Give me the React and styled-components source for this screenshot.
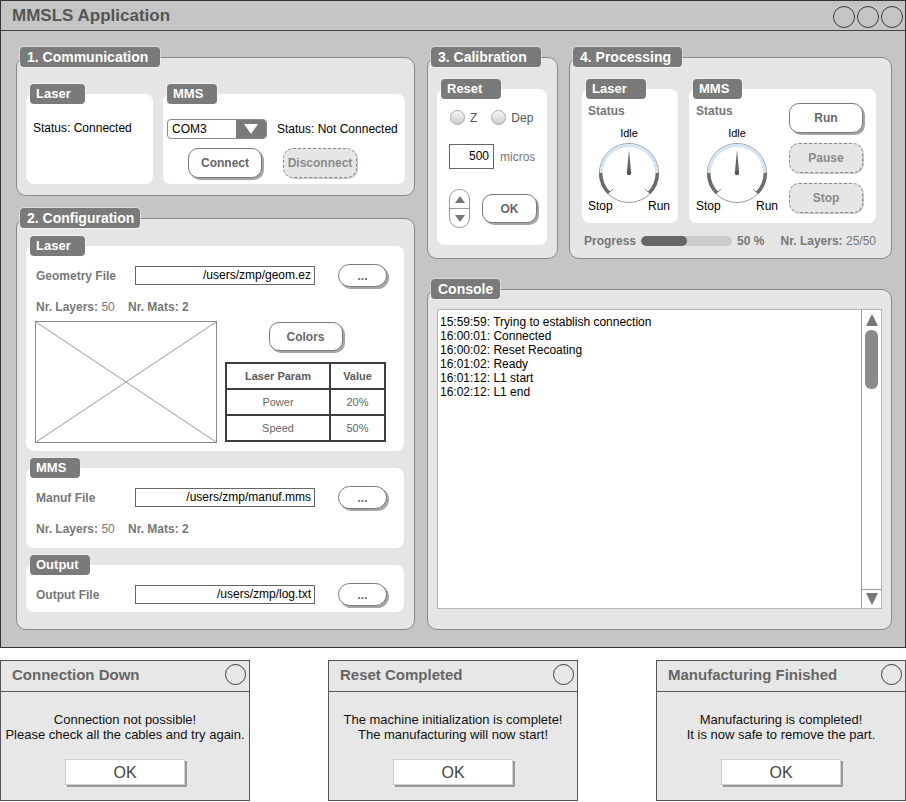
import React from "react";
import styled, { createGlobalStyle, css } from "styled-components";

const GlobalStyle = createGlobalStyle`
  html, body { margin: 0; padding: 0; background: #fff; }
  body { font-family: "Liberation Sans", Arial, Helvetica, sans-serif; font-size: 12px; color: #111; }
  * { box-sizing: border-box; }
`;

const Page = styled.div`
  width: 906px;
  height: 802px;
  display: flex;
  flex-direction: column;
`;

const Window = styled.div`
  width: 906px;
  height: 648px;
  border: 1px solid #333;
  background: #c5c5c5;
  display: flex;
  flex-direction: column;
`;

const TitleBar = styled.div`
  height: 30px;
  flex: none;
  border-bottom: 1px solid #444;
  display: flex;
  align-items: center;
  padding: 0 2px 0 11px;
`;

const AppTitle = styled.div`
  font-size: 17px;
  font-weight: bold;
  color: #555;
`;

const WinButtons = styled.div`
  margin-left: auto;
  align-self: flex-end;
  margin-bottom: 2px;
  display: flex;
  gap: 2px;
`;

const WinCircle = styled.span`
  width: ${p => p.$size || 22}px;
  height: ${p => p.$size || 22}px;
  border: 1px solid #3a3a3a;
  border-radius: 50%;
`;

const Body = styled.div`
  flex: 1;
  display: grid;
  grid-template-columns: 399px 465px;
  column-gap: 12px;
  padding: 16px 0 17px 15px;
`;

const Column = styled.div`
  display: flex;
  flex-direction: column;
  gap: ${p => p.$gap}px;
  min-height: 0;
`;

const TopRow = styled.div`
  display: flex;
  gap: 11px;
`;

const Group = styled.section`
  display: flex;
  flex-direction: column;
  ${p => p.$fill && css`flex: 1;`}
  ${p => p.$w && css`width: ${p.$w}px;`}
`;

const GroupTab = styled.div`
  z-index: 1;
  align-self: flex-start;
  margin-left: 4px;
  width: ${p => p.$w}px;
  height: 20px;
  line-height: 20px;
  padding-left: 7px;
  background: #7a7a7a;
  color: #fff;
  font-size: 14px;
  font-weight: bold;
  border-radius: 4px;
  box-shadow: 0 0 0 1px rgba(255, 255, 255, 0.35);
  white-space: nowrap;
`;

const GroupBox = styled.div`
  margin-top: -10px;
  flex: 1;
  display: flex;
  flex-direction: column;
  background: #e5e5e5;
  border: 1px solid #8a8a8a;
  border-radius: 10px;
  padding: ${p => p.$pad};
`;

const PanelRow = styled.div`
  display: flex;
  gap: ${p => p.$gap}px;
`;

const PanelStack = styled.div`
  display: flex;
  flex-direction: column;
  gap: 7px;
`;

const Panel = styled.div`
  display: flex;
  flex-direction: column;
  ${p => p.$w && css`width: ${p.$w}px;`}
`;

const PanelTab = styled(GroupTab)`
  font-size: 13px;
  padding-left: 6px;
`;

const PanelBody = styled.div`
  margin-top: -10px;
  background: #fff;
  border-radius: 8px;
  padding: ${p => p.$pad};
  ${p => p.$h && css`height: ${p.$h}px;`}
  display: flex;
  flex-direction: ${p => (p.$row ? "row" : "column")};
`;

const StatusText = styled.div`
  font-size: 12px;
  line-height: 14px;
  color: #000;
  white-space: nowrap;
`;

const Row = styled.div`
  display: flex;
  align-items: center;
  gap: ${p => p.$gap || 0}px;
  margin-top: ${p => p.$mt || 0}px;
  padding-left: ${p => p.$pl || 0}px;
`;

const Select = styled.div`
  width: 100px;
  height: 20px;
  margin-right: 10px;
  display: flex;
  border: 1px solid #8a8a8a;
  border-radius: 4px;
  overflow: hidden;
  background: #fff;
`;

const SelectValue = styled.span`
  flex: 1;
  padding-left: 4px;
  line-height: 18px;
  font-size: 12px;
  color: #000;
`;

const SelectArrow = styled.span`
  width: 30px;
  background: #7a7a7a;
  display: flex;
  align-items: center;
  justify-content: center;
`;

const Tri = styled.span`
  width: 0;
  height: 0;
  border-left: ${p => p.$s}px solid transparent;
  border-right: ${p => p.$s}px solid transparent;
  ${p =>
    p.$down
      ? css`border-top: ${p.$h}px solid ${p.$c};`
      : css`border-bottom: ${p.$h}px solid ${p.$c};`}
`;

const PillButton = styled.div`
  width: ${p => p.$w}px;
  height: ${p => p.$h || 30}px;
  flex: none;
  border-radius: ${p => p.$r || 10}px;
  display: flex;
  align-items: center;
  justify-content: center;
  font-size: 12px;
  font-weight: bold;
  margin-left: ${p => p.$ml || 0}px;
  ${p =>
    p.$off
      ? css`
          background: #e6e6e6;
          border: 1px dashed #8a8a8a;
          color: #8a8a8a;
          box-shadow: 1px 1px 0 #c8c8c8;
        `
      : css`
          background: #fff;
          border: 1px solid #7a7a7a;
          color: #666;
          box-shadow: 2px 2px 0 #a5a5a5;
        `}
`;

const FileRow = styled.div`
  display: flex;
  align-items: center;
  height: 23px;
`;

const FieldLabel = styled.span`
  width: 99px;
  font-weight: bold;
  color: #777;
`;

const PathInput = styled.div`
  width: 180px;
  height: 19px;
  border: 1px solid #666;
  background: #fff;
  text-align: right;
  padding-right: 3px;
  line-height: 17px;
  color: #000;
`;

const InfoLine = styled.div`
  display: flex;
  margin-top: 13px;
  line-height: 14px;
  color: #777;
`;

const InfoItem = styled.span`
  width: ${p => (p.$w ? `${p.$w}px` : "auto")};
  white-space: nowrap;
`;

const Strong = styled.b`
  color: #777;
`;

const ConfigRow = styled.div`
  display: flex;
  margin-top: 7px;
  margin-left: -1px;
`;

const ConfigAside = styled.div`
  width: 161px;
  margin-left: 8px;
  padding-top: 1px;
  display: flex;
  flex-direction: column;
  align-items: center;
  gap: 11px;
`;

const ParamTable = styled.table`
  width: 161px;
  height: 80px;
  border-collapse: collapse;
  border: 2px solid #3e3e3e;
  background: #fff;
  font-size: 11px;
  color: #666;
  text-align: center;
  th, td { border: 2px solid #3e3e3e; padding: 0; }
  th { font-weight: bold; color: #5a5a5a; }
  th:first-child, td:first-child { width: 104px; }
`;

const RadioMark = styled.span`
  width: 15px;
  height: 15px;
  border-radius: 50%;
  border: 1px solid #aaa;
  background: linear-gradient(#f6f6f6, #cdcdcd);
  margin-right: 5px;
  margin-left: ${p => p.$ml || 0}px;
`;

const RadioLabel = styled.span`
  color: #555;
  font-size: 12px;
  margin-right: ${p => p.$mr || 0}px;
`;

const NumInput = styled.div`
  width: 45px;
  height: 25px;
  border: 1px solid #666;
  text-align: right;
  padding-right: 4px;
  line-height: 23px;
  color: #000;
`;

const Unit = styled.span`
  margin-left: 6px;
  color: #777;
`;

const Spinner = styled.div`
  width: 21px;
  height: 39px;
  border: 1px solid #9a9a9a;
  border-radius: 10px;
  display: flex;
  flex-direction: column;
`;

const SpinHalf = styled.div`
  flex: 1;
  display: flex;
  align-items: center;
  justify-content: center;
  ${p => p.$split && css`border-top: 1px solid #9a9a9a;`}
`;

const GaugeCol = styled.div`
  width: 82px;
  display: flex;
  flex-direction: column;
  align-items: center;
`;

const GroupLabel = styled.div`
  align-self: flex-start;
  font-weight: bold;
  color: #777;
  line-height: 14px;
`;

const GaugeText = styled.div`
  line-height: 14px;
  margin-top: 8px;
  margin-bottom: 2px;
  font-size: 11px;
  color: #000;
`;

const GaugeFoot = styled.div`
  width: 100%;
  margin-top: -5px;
  display: flex;
  justify-content: space-between;
  line-height: 14px;
  color: #000;
`;

const ButtonStack = styled.div`
  display: flex;
  flex-direction: column;
  gap: 10px;
  margin-left: 11px;
  margin-top: -1px;
`;

const ProgressRow = styled.div`
  display: flex;
  align-items: center;
  height: 14px;
  margin-top: 11px;
  padding-left: 2px;
  color: #777;
`;

const ProgressLabel = styled.b`
  width: 57px;
`;

const Track = styled.div`
  width: 91px;
  height: 10px;
  border-radius: 5px;
  background: #cbcbcb;
  overflow: hidden;
`;

const Fill = styled.div`
  height: 100%;
  background: #666;
  border-radius: 5px;
`;

const Percent = styled.b`
  margin-left: 5px;
`;

const LayerCount = styled.span`
  margin-left: auto;
`;

const ConsoleArea = styled.div`
  flex: 1;
  display: flex;
  background: #fff;
  border: 1px solid #b5b5b5;
`;

const LogText = styled.div`
  flex: 1;
  padding: 5px 2px;
  font-size: 12px;
  line-height: 14px;
  color: #000;
`;

const ScrollBar = styled.div`
  width: 20px;
  border-left: 1px solid #9a9a9a;
  display: flex;
  flex-direction: column;
  align-items: center;
`;

const ScrollCell = styled.div`
  width: 100%;
  height: 19px;
  display: flex;
  align-items: center;
  justify-content: center;
  ${p => p.$bottom && css`margin-top: auto; border-top: 1px solid #9a9a9a;`}
`;

const Thumb = styled.div`
  width: 13px;
  height: 59px;
  margin-top: 1px;
  border-radius: 6px;
  background: #8a8a8a;
`;

const DialogRow = styled.div`
  display: flex;
  justify-content: space-between;
  margin-top: 12px;
`;

const Dialog = styled.div`
  width: 250px;
  height: 141px;
  border: 1px solid #555;
  background: #e7e7e7;
  display: flex;
  flex-direction: column;
`;

const DialogHead = styled.div`
  height: 31px;
  border-bottom: 1px solid #555;
  display: flex;
  align-items: center;
  justify-content: space-between;
  padding: 0 3px 3px 11px;
  font-size: 15px;
  font-weight: bold;
  color: #666;
`;

const DialogBody = styled.div`
  display: flex;
  flex-direction: column;
  align-items: center;
  padding-top: 20px;
  font-size: 13px;
  line-height: 15px;
  color: #111;
  text-align: center;
`;

const OkButton = styled.div`
  width: 120px;
  height: 26px;
  margin-top: 17px;
  background: #fff;
  border: 1px solid #d0d0d0;
  box-shadow: 2px 2px 0 #9a9a9a;
  display: flex;
  align-items: center;
  justify-content: center;
  font-size: 16px;
  color: #444;
`;

function Placeholder() {
  return (
    <svg width="182" height="122" viewBox="0 0 182 122">
      <rect x="0.5" y="0.5" width="181" height="121" fill="#fff" stroke="#8a8a8a" />
      <line x1="1" y1="1" x2="181" y2="121" stroke="#9a9a9a" />
      <line x1="181" y1="1" x2="1" y2="121" stroke="#9a9a9a" />
    </svg>
  );
}

function Gauge() {
  const c = 31;
  const r = 29.5;
  const ri = 27.5;
  const pt = (deg, rad) => [
    (c + rad * Math.cos((deg * Math.PI) / 180)).toFixed(2),
    (c + rad * Math.sin((deg * Math.PI) / 180)).toFixed(2),
  ];
  const rd = 28.3;
  const [l1x, l1y] = pt(135, rd);
  const [r1x, r1y] = pt(45, rd);
  const [t1x, t1y] = pt(135, 27);
  const [t2x, t2y] = pt(135, 23);
  const [t3x, t3y] = pt(45, 27);
  const [t4x, t4y] = pt(45, 23);
  return (
    <svg width="62" height="62" viewBox="0 0 62 62">
      <circle cx={c} cy={c} r={r} fill="#fff" stroke="#9a9a9a" strokeWidth="1" />
      <path d={`M ${c - ri} ${c} A ${ri} ${ri} 0 0 1 ${c + ri} ${c}`} fill="none" stroke="#d4e4f4" strokeWidth="3" />
      <path d={`M ${c - rd} ${c} A ${rd} ${rd} 0 0 0 ${l1x} ${l1y}`} fill="none" stroke="#6c6c6c" strokeWidth="3.5" />
      <path d={`M ${c + rd} ${c} A ${rd} ${rd} 0 0 1 ${r1x} ${r1y}`} fill="none" stroke="#6c6c6c" strokeWidth="3.5" />
      <line x1={t1x} y1={t1y} x2={t2x} y2={t2y} stroke="#777" strokeWidth="1" />
      <line x1={t3x} y1={t3y} x2={t4x} y2={t4y} stroke="#777" strokeWidth="1" />
      <polygon points={`${c},${c - 23} ${c - 2.2},${c} ${c + 2.2},${c}`} fill="#666" />
      <circle cx={c} cy={c} r="2.2" fill="#555" />
    </svg>
  );
}

function GaugeBlock() {
  return (
    <GaugeCol>
      <GroupLabel>Status</GroupLabel>
      <GaugeText>Idle</GaugeText>
      <Gauge />
      <GaugeFoot>
        <span>Stop</span>
        <span>Run</span>
      </GaugeFoot>
    </GaugeCol>
  );
}

function FileField({ label, path }) {
  return (
    <FileRow>
      <FieldLabel>{label}</FieldLabel>
      <PathInput>{path}</PathInput>
      <PillButton $w={49} $h={23} $r={12} $ml={23}>...</PillButton>
    </FileRow>
  );
}

function Counts() {
  return (
    <InfoLine>
      <InfoItem $w={92}>
        <Strong>Nr. Layers:</Strong> 50
      </InfoItem>
      <InfoItem>
        <Strong>Nr. Mats: 2</Strong>
      </InfoItem>
    </InfoLine>
  );
}

const logLines = [
  "15:59:59: Trying to establish connection",
  "16:00:01: Connected",
  "16:00:02: Reset Recoating",
  "16:01:02: Ready",
  "16:01:12: L1 start",
  "16:02:12: L1 end",
];

const dialogs = [
  {
    title: "Connection Down",
    lines: ["Connection not possible!", "Please check all the cables and try again."],
  },
  {
    title: "Reset Completed",
    lines: ["The machine initialization is complete!", "The manufacturing will now start!"],
  },
  {
    title: "Manufacturing Finished",
    lines: ["Manufacturing is completed!", "It is now safe to remove the part."],
  },
];

export default function App() {
  const progress = 50;
  return (
    <>
      <GlobalStyle />
      <Page>
        <Window>
          <TitleBar>
            <AppTitle>MMSLS Application</AppTitle>
            <WinButtons>
              <WinCircle />
              <WinCircle />
              <WinCircle />
            </WinButtons>
          </TitleBar>

          <Body>
            <Column $gap={12}>
              <Group>
                <GroupTab $w={140}>1. Communication</GroupTab>
                <GroupBox $pad="26px 9px 11px 9px">
                  <PanelRow $gap={10}>
                    <Panel $w={127}>
                      <PanelTab $w={55}>Laser</PanelTab>
                      <PanelBody $h={90} $pad="27px 7px 0">
                        <StatusText>Status: Connected</StatusText>
                      </PanelBody>
                    </Panel>
                    <Panel $w={242}>
                      <PanelTab $w={50}>MMS</PanelTab>
                      <PanelBody $h={90} $pad="25px 4px 0">
                        <Row>
                          <Select>
                            <SelectValue>COM3</SelectValue>
                            <SelectArrow>
                              <Tri $down $s={7} $h={10} $c="#fff" />
                            </SelectArrow>
                          </Select>
                          <StatusText>Status: Not Connected</StatusText>
                        </Row>
                        <Row $mt={9} $pl={21} $gap={21}>
                          <PillButton $w={74}>Connect</PillButton>
                          <PillButton $w={74} $off>Disconnect</PillButton>
                        </Row>
                      </PanelBody>
                    </Panel>
                  </PanelRow>
                </GroupBox>
              </Group>

              <Group $fill>
                <GroupTab $w={120}>2. Configuration</GroupTab>
                <GroupBox $pad="17px 10px 17px 9px">
                  <PanelStack>
                    <Panel>
                      <PanelTab $w={55}>Laser</PanelTab>
                      <PanelBody $h={205} $pad="18px 10px 8px 10px">
                        <FileField label="Geometry File" path="/users/zmp/geom.ez" />
                        <Counts />
                        <ConfigRow>
                          <Placeholder />
                          <ConfigAside>
                            <PillButton $w={74} $h={29}>Colors</PillButton>
                            <ParamTable>
                              <tbody>
                                <tr>
                                  <th>Laser Param</th>
                                  <th>Value</th>
                                </tr>
                                <tr>
                                  <td>Power</td>
                                  <td>20%</td>
                                </tr>
                                <tr>
                                  <td>Speed</td>
                                  <td>50%</td>
                                </tr>
                              </tbody>
                            </ParamTable>
                          </ConfigAside>
                        </ConfigRow>
                      </PanelBody>
                    </Panel>
                    <Panel>
                      <PanelTab $w={50}>MMS</PanelTab>
                      <PanelBody $h={80} $pad="18px 10px 0 10px">
                        <FileField label="Manuf File" path="/users/zmp/manuf.mms" />
                        <Counts />
                      </PanelBody>
                    </Panel>
                    <Panel>
                      <PanelTab $w={60}>Output</PanelTab>
                      <PanelBody $h={47} $pad="18px 10px 0 10px">
                        <FileField label="Output File" path="/users/zmp/log.txt" />
                      </PanelBody>
                    </Panel>
                  </PanelStack>
                </GroupBox>
              </Group>
            </Column>

            <Column $gap={20}>
              <TopRow>
                <Group $w={131}>
                  <GroupTab $w={110}>3. Calibration</GroupTab>
                  <GroupBox $pad="21px 10px 13px 9px">
                    <Panel>
                      <PanelTab $w={60}>Reset</PanelTab>
                      <PanelBody $h={156} $pad="21px 0 0 12px">
                        <Row>
                          <RadioMark $ml={1} />
                          <RadioLabel $mr={14}>Z</RadioLabel>
                          <RadioMark />
                          <RadioLabel>Dep</RadioLabel>
                        </Row>
                        <Row $mt={19}>
                          <NumInput>500</NumInput>
                          <Unit>micros</Unit>
                        </Row>
                        <Row $mt={20}>
                          <Spinner>
                            <SpinHalf>
                              <Tri $s={5} $h={7} $c="#777" />
                            </SpinHalf>
                            <SpinHalf $split>
                              <Tri $down $s={5} $h={7} $c="#777" />
                            </SpinHalf>
                          </Spinner>
                          <PillButton $w={55} $h={29} $ml={12}>OK</PillButton>
                        </Row>
                      </PanelBody>
                    </Panel>
                  </GroupBox>
                </Group>

                <Group $w={323}>
                  <GroupTab $w={109}>4. Processing</GroupTab>
                  <GroupBox $pad="21px 15px 10px 12px">
                    <PanelRow $gap={11}>
                      <Panel $w={96}>
                        <PanelTab $w={60}>Laser</PanelTab>
                        <PanelBody $row $h={134} $pad="15px 0 0 6px">
                          <GaugeBlock />
                        </PanelBody>
                      </Panel>
                      <Panel $w={187}>
                        <PanelTab $w={49}>MMS</PanelTab>
                        <PanelBody $row $h={134} $pad="15px 0 0 7px">
                          <GaugeBlock />
                          <ButtonStack>
                            <PillButton $w={74}>Run</PillButton>
                            <PillButton $w={74} $off>Pause</PillButton>
                            <PillButton $w={74} $off>Stop</PillButton>
                          </ButtonStack>
                        </PanelBody>
                      </Panel>
                    </PanelRow>
                    <ProgressRow>
                      <ProgressLabel>Progress</ProgressLabel>
                      <Track>
                        <Fill style={{ width: `${progress}%` }} />
                      </Track>
                      <Percent>{progress} %</Percent>
                      <LayerCount>
                        <b>Nr. Layers:</b> 25/50
                      </LayerCount>
                    </ProgressRow>
                  </GroupBox>
                </Group>
              </TopRow>

              <Group $fill>
                <GroupTab $w={69}>Console</GroupTab>
                <GroupBox $pad="19px 9px 20px 9px">
                  <ConsoleArea>
                    <LogText>
                      {logLines.map(l => (
                        <div key={l}>{l}</div>
                      ))}
                    </LogText>
                    <ScrollBar>
                      <ScrollCell>
                        <Tri $s={6.5} $h={12} $c="#777" />
                      </ScrollCell>
                      <Thumb />
                      <ScrollCell $bottom>
                        <Tri $down $s={6.5} $h={12} $c="#777" />
                      </ScrollCell>
                    </ScrollBar>
                  </ConsoleArea>
                </GroupBox>
              </Group>
            </Column>
          </Body>
        </Window>

        <DialogRow>
          {dialogs.map(d => (
            <Dialog key={d.title}>
              <DialogHead>
                <span>{d.title}</span>
                <WinCircle $size={21} />
              </DialogHead>
              <DialogBody>
                {d.lines.map(l => (
                  <div key={l}>{l}</div>
                ))}
                <OkButton>OK</OkButton>
              </DialogBody>
            </Dialog>
          ))}
        </DialogRow>
      </Page>
    </>
  );
}
